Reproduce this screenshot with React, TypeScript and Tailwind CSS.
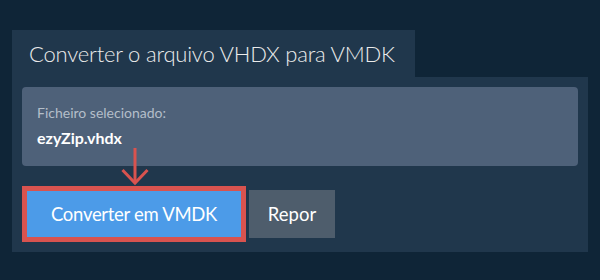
import React from 'react';

const App: React.FC = () => {
  return (
    <div className="w-[600px] h-[280px] bg-[#0f2537] pt-[30px] px-[12px] font-['Lato',sans-serif] text-[#ebebeb]">
      {/* Tab */}
      <div className="w-[403px] h-[47px] bg-[#20374c] pl-[17px] flex items-center">
        <h1 className="text-[22px] font-light leading-none tracking-[-0.2px]">Converter o arquivo VHDX para VMDK</h1>
      </div>

      {/* Panel */}
      <div className="w-[576px] bg-[#20374c] p-[10px]">
        <div className="h-[79px] rounded-[4px] bg-[#4e6179] pl-[15px] pt-[16px]">
          <div className="text-[14px] leading-[20px] text-[#b4bec9]">Ficheiro selecionado:</div>
          <div className="mt-[5px] text-[16px] leading-[20px] font-bold text-white">ezyZip.vhdx</div>
        </div>

        <div className="relative mt-[20px] flex items-center">
          {/* Arrow pointing at the convert button */}
          <svg
            className="absolute left-[99px] top-[-38px]"
            width="28"
            height="38"
            viewBox="0 0 28 38"
            fill="none"
            stroke="#d9534f"
            strokeWidth="3"
          >
            <path d="M14 0 L14 35" />
            <path d="M1.5 22 L14 35 L26.5 22" />
          </svg>

          <div className="border-[5px] border-[#d9534f]">
            <button className="w-[214px] h-[46px] bg-[#4c9be8] text-white text-[18.5px] leading-none tracking-[-0.3px]">
              Converter em VMDK
            </button>
          </div>
          <button className="ml-[3px] w-[86px] h-[48px] bg-[#4e5d6c] text-white text-[18.5px] leading-none">
            Repor
          </button>
        </div>
      </div>
    </div>
  );
};

export default App;
